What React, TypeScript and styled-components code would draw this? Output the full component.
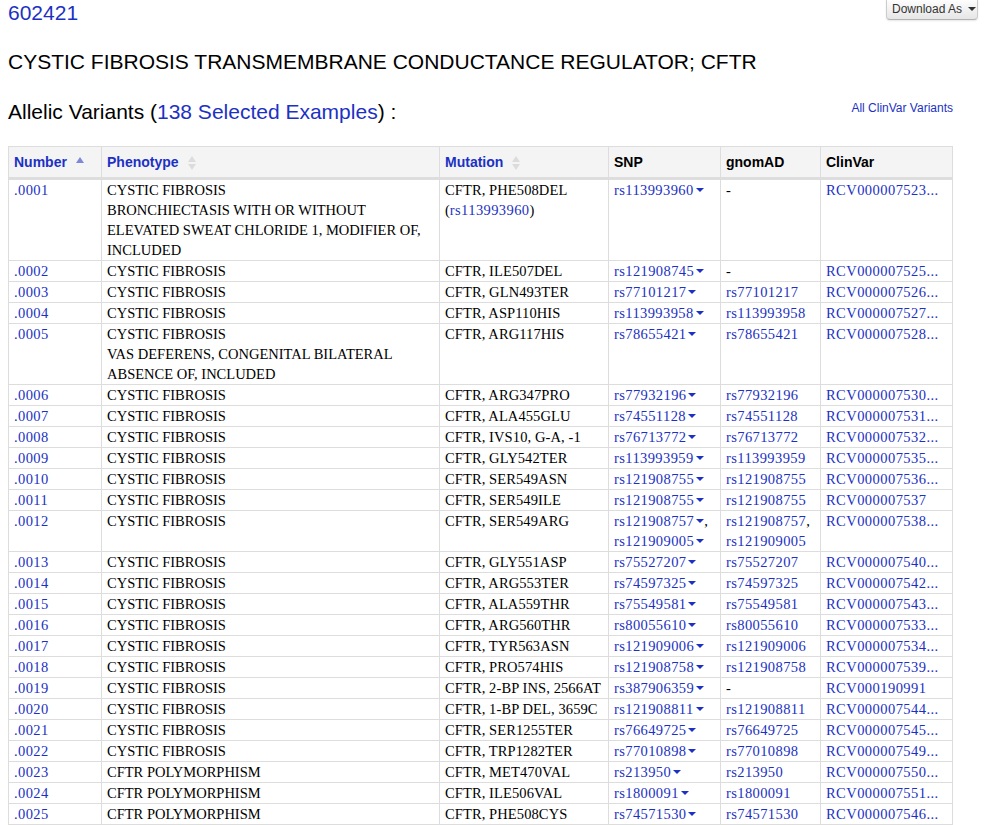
import React from 'react'
import styled, { createGlobalStyle } from 'styled-components'

const LINK = '#1c31c4'

const GlobalStyle = createGlobalStyle`
  html, body {
    margin: 0;
    height: 825px;
    overflow: hidden;
    background: #fff;
    color: #000;
    font-family: 'Liberation Sans', Arial, sans-serif;
  }
`

type Variant = {
  num: string
  pheno: string[]
  mutation: string
  mutationRef?: string
  snp: string[]
  gnomad: string[]
  clinvar: string
}

const cf = ['CYSTIC FIBROSIS']
const poly = ['CFTR POLYMORPHISM']

const row = (num: string, pheno: string[], mutation: string, snp: string, gnomad: string, clinvar: string): Variant => ({
  num,
  pheno,
  mutation,
  snp: [snp],
  gnomad: gnomad === '-' ? [] : [gnomad],
  clinvar
})

const VARIANTS: Variant[] = [
  {
    num: '.0001',
    pheno: ['CYSTIC FIBROSIS', 'BRONCHIECTASIS WITH OR WITHOUT', 'ELEVATED SWEAT CHLORIDE 1, MODIFIER OF,', 'INCLUDED'],
    mutation: 'CFTR, PHE508DEL',
    mutationRef: 'rs113993960',
    snp: ['rs113993960'],
    gnomad: [],
    clinvar: 'RCV000007523...'
  },
  row('.0002', cf, 'CFTR, ILE507DEL', 'rs121908745', '-', 'RCV000007525...'),
  row('.0003', cf, 'CFTR, GLN493TER', 'rs77101217', 'rs77101217', 'RCV000007526...'),
  row('.0004', cf, 'CFTR, ASP110HIS', 'rs113993958', 'rs113993958', 'RCV000007527...'),
  row(
    '.0005',
    ['CYSTIC FIBROSIS', 'VAS DEFERENS, CONGENITAL BILATERAL', 'ABSENCE OF, INCLUDED'],
    'CFTR, ARG117HIS',
    'rs78655421',
    'rs78655421',
    'RCV000007528...'
  ),
  row('.0006', cf, 'CFTR, ARG347PRO', 'rs77932196', 'rs77932196', 'RCV000007530...'),
  row('.0007', cf, 'CFTR, ALA455GLU', 'rs74551128', 'rs74551128', 'RCV000007531...'),
  row('.0008', cf, 'CFTR, IVS10, G-A, -1', 'rs76713772', 'rs76713772', 'RCV000007532...'),
  row('.0009', cf, 'CFTR, GLY542TER', 'rs113993959', 'rs113993959', 'RCV000007535...'),
  row('.0010', cf, 'CFTR, SER549ASN', 'rs121908755', 'rs121908755', 'RCV000007536...'),
  row('.0011', cf, 'CFTR, SER549ILE', 'rs121908755', 'rs121908755', 'RCV000007537'),
  {
    num: '.0012',
    pheno: cf,
    mutation: 'CFTR, SER549ARG',
    snp: ['rs121908757', 'rs121909005'],
    gnomad: ['rs121908757', 'rs121909005'],
    clinvar: 'RCV000007538...'
  },
  row('.0013', cf, 'CFTR, GLY551ASP', 'rs75527207', 'rs75527207', 'RCV000007540...'),
  row('.0014', cf, 'CFTR, ARG553TER', 'rs74597325', 'rs74597325', 'RCV000007542...'),
  row('.0015', cf, 'CFTR, ALA559THR', 'rs75549581', 'rs75549581', 'RCV000007543...'),
  row('.0016', cf, 'CFTR, ARG560THR', 'rs80055610', 'rs80055610', 'RCV000007533...'),
  row('.0017', cf, 'CFTR, TYR563ASN', 'rs121909006', 'rs121909006', 'RCV000007534...'),
  row('.0018', cf, 'CFTR, PRO574HIS', 'rs121908758', 'rs121908758', 'RCV000007539...'),
  row('.0019', cf, 'CFTR, 2-BP INS, 2566AT', 'rs387906359', '-', 'RCV000190991'),
  row('.0020', cf, 'CFTR, 1-BP DEL, 3659C', 'rs121908811', 'rs121908811', 'RCV000007544...'),
  row('.0021', cf, 'CFTR, SER1255TER', 'rs76649725', 'rs76649725', 'RCV000007545...'),
  row('.0022', cf, 'CFTR, TRP1282TER', 'rs77010898', 'rs77010898', 'RCV000007549...'),
  row('.0023', poly, 'CFTR, MET470VAL', 'rs213950', 'rs213950', 'RCV000007550...'),
  row('.0024', poly, 'CFTR, ILE506VAL', 'rs1800091', 'rs1800091', 'RCV000007551...'),
  row('.0025', poly, 'CFTR, PHE508CYS', 'rs74571530', 'rs74571530', 'RCV000007546...')
]

const App = () => (
  <Page>
    <GlobalStyle />
    <TopBar>
      <EntryLink href='#'>602421</EntryLink>
      <DownloadButton type='button'>
        Download As <Caret $color='#333' />
      </DownloadButton>
    </TopBar>
    <Title>CYSTIC FIBROSIS TRANSMEMBRANE CONDUCTANCE REGULATOR; CFTR</Title>
    <SectionRow>
      <SectionTitle>
        Allelic Variants (<a href='#'>138 Selected Examples</a>) :
      </SectionTitle>
      <SmallLink href='#'>All ClinVar Variants</SmallLink>
    </SectionRow>
    <Table>
      <colgroup>
        <col width={93} />
        <col width={338} />
        <col width={169} />
        <col width={112} />
        <col width={100} />
        <col width={132} />
      </colgroup>
      <thead>
        <tr>
          <Th>
            <HeadCell>
              <HeadLink href='#'>Number</HeadLink>
              <SortIcon $single>
                <Arrow $up $color='#7d88d8' />
              </SortIcon>
            </HeadCell>
          </Th>
          <Th>
            <HeadCell>
              <HeadLink href='#'>Phenotype</HeadLink>
              <SortIcon>
                <Arrow $up />
                <Arrow />
              </SortIcon>
            </HeadCell>
          </Th>
          <Th>
            <HeadCell>
              <HeadLink href='#'>Mutation</HeadLink>
              <SortIcon>
                <Arrow $up />
                <Arrow />
              </SortIcon>
            </HeadCell>
          </Th>
          <Th>SNP</Th>
          <Th>gnomAD</Th>
          <Th>ClinVar</Th>
        </tr>
      </thead>
      <tbody>
        {VARIANTS.map((v) => (
          <tr key={v.num}>
            <Td>
              <NumLink href='#'>{v.num}</NumLink>
            </Td>
            <Td>
              {v.pheno.map((line) => (
                <Line key={line}>{line}</Line>
              ))}
            </Td>
            <Td>
              <Line $spaced>{v.mutation}</Line>
              {v.mutationRef && (
                <Line>
                  (<IdLink href='#'>{v.mutationRef}</IdLink>)
                </Line>
              )}
            </Td>
            <Td>
              {v.snp.map((id, i) => (
                <Line key={id}>
                  <IdLink href='#'>{id}</IdLink>
                  <Caret $color={LINK} />
                  {i < v.snp.length - 1 && ','}
                </Line>
              ))}
            </Td>
            <Td>
              {v.gnomad.length === 0
                ? '-'
                : v.gnomad.map((id, i) => (
                    <Line key={id}>
                      <IdLink href='#'>{id}</IdLink>
                      {i < v.gnomad.length - 1 && ','}
                    </Line>
                  ))}
            </Td>
            <Td>
              <ClinvarLink href='#'>{v.clinvar}</ClinvarLink>
            </Td>
          </tr>
        ))}
      </tbody>
    </Table>
  </Page>
)

export default App

const Page = styled.div`
  width: 987px;
  padding: 0 9px 0 8px;
  box-sizing: border-box;

  a {
    color: ${LINK};
    text-decoration: none;
  }
`

const TopBar = styled.div`
  display: flex;
  justify-content: space-between;
  align-items: flex-start;
  height: 24px;
`

const EntryLink = styled.a`
  font-size: 21px;
  line-height: 25px;
`

const DownloadButton = styled.button`
  display: flex;
  align-items: center;
  gap: 4px;
  box-sizing: border-box;
  width: 92px;
  height: 20px;
  margin: 0;
  padding: 0 0 1px 5px;
  border: 1px solid #ccc;
  border-top: none;
  border-bottom-color: #b3b3b3;
  border-radius: 0 0 4px 4px;
  background: linear-gradient(#fdfdfd, #e6e6e6);
  box-shadow: 0 1px 2px rgba(0, 0, 0, 0.1);
  color: #333;
  font-family: inherit;
  font-size: 12px;
  white-space: nowrap;
`

const Caret = styled.span<{ $color: string }>`
  display: inline-block;
  width: 0;
  height: 0;
  margin-left: 2px;
  vertical-align: 3px;
  border-top: 4px solid ${(p) => p.$color};
  border-left: 4px solid transparent;
  border-right: 4px solid transparent;
`

const Title = styled.h1`
  margin: 25px 0 0;
  font-size: 21px;
  font-weight: 400;
  line-height: 25px;
`

const SectionRow = styled.div`
  display: flex;
  justify-content: space-between;
  align-items: center;
  width: 945px;
  margin-top: 25px;
  height: 25px;
`

const SectionTitle = styled.h2`
  margin: 0;
  font-size: 21px;
  font-weight: 400;
  line-height: 25px;
`

const SmallLink = styled.a`
  font-size: 12px;
  margin-top: -8px;
`

const Table = styled.table`
  width: 944px;
  margin: 22px 0 0;
  table-layout: fixed;
  border-collapse: collapse;
  font-family: 'Liberation Serif', 'Times New Roman', serif;
  font-size: 14.5px;
  font-variant-numeric: oldstyle-nums;
  line-height: 20px;
`

const Th = styled.th`
  height: 30px;
  padding: 0 5px;
  border: 1px solid #ddd;
  border-bottom-width: 3px;
  background: #f4f4f4;
  color: #000;
  font-family: 'Liberation Sans', Arial, sans-serif;
  font-size: 14px;
  font-weight: 700;
  text-align: left;
  white-space: nowrap;
`

const HeadCell = styled.div`
  display: flex;
  align-items: center;
  height: 30px;
`

const HeadLink = styled.a`
  font-weight: 700;
`

const SortIcon = styled.span<{ $single?: boolean }>`
  display: flex;
  flex-direction: column;
  gap: 2px;
  margin-left: 9px;
  margin-top: ${(p) => (p.$single ? '-5px' : '2px')};
`

const Arrow = styled.span<{ $up?: boolean; $color?: string }>`
  display: block;
  width: 0;
  height: 0;
  border-left: 4px solid transparent;
  border-right: 4px solid transparent;
  ${(p) =>
    p.$up
      ? `border-bottom: 6px solid ${p.$color || '#dcdcdc'};`
      : `border-top: 6px solid ${p.$color || '#dcdcdc'};`}
`

const Td = styled.td`
  padding: 0 5px;
  border: 1px solid #ddd;
  vertical-align: top;
  white-space: nowrap;
  overflow: hidden;
`

const Line = styled.div<{ $spaced?: boolean }>`
  line-height: 20px;
  letter-spacing: ${(p) => (p.$spaced ? '0.1px' : '0')};
`

const NumLink = styled.a`
  letter-spacing: 0.4px;
`

const IdLink = styled.a`
  letter-spacing: 0.4px;
`

const ClinvarLink = styled.a`
  letter-spacing: 0.45px;
`
